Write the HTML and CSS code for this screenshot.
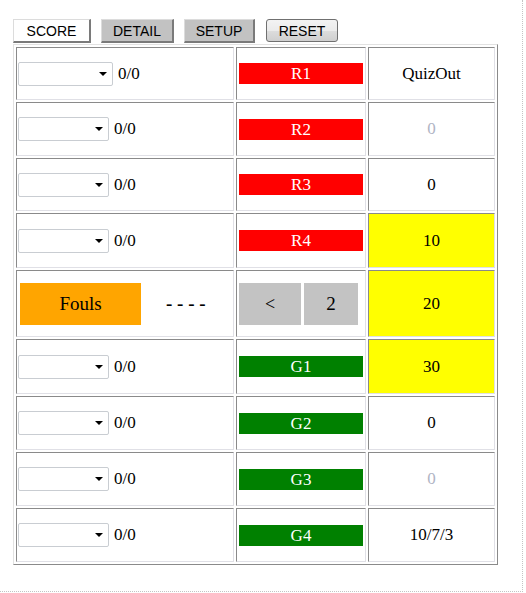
FILE: index.html
```html
<!DOCTYPE html>
<html>
<head>
<meta charset="utf-8">
<link rel="stylesheet" href="styles.css">
</head>
<body>
<div class="page">
  <div class="tabs">
    <button class="tab tab-score">SCORE</button>
    <button class="tab tab-gray tab-detail">DETAIL</button>
    <button class="tab tab-gray tab-setup">SETUP</button>
    <button class="tab-reset">RESET</button>
  </div>
  <table class="board">
    <tr class="r-a">
      <td class="c1"><span class="sel sel-wide"></span><span class="cnt cnt-wide">0/0</span></td>
      <td class="c2"><div class="bar red">R1</div></td>
      <td class="c3">QuizOut</td>
    </tr>
    <tr class="r-b">
      <td class="c1"><span class="sel"></span><span class="cnt">0/0</span></td>
      <td class="c2"><div class="bar red">R2</div></td>
      <td class="c3 dim">0</td>
    </tr>
    <tr class="r-a">
      <td class="c1"><span class="sel"></span><span class="cnt">0/0</span></td>
      <td class="c2"><div class="bar red">R3</div></td>
      <td class="c3">0</td>
    </tr>
    <tr class="r-c">
      <td class="c1"><span class="sel"></span><span class="cnt">0/0</span></td>
      <td class="c2"><div class="bar red">R4</div></td>
      <td class="c3 yellow">10</td>
    </tr>
    <tr class="r-d">
      <td class="c1">
        <div class="fouls-row">
          <div class="fouls">Fouls</div>
          <div class="dashes">- - - -</div>
        </div>
      </td>
      <td class="c2">
        <div class="nav-row">
          <div class="nav nav-prev">&lt;</div>
          <div class="nav nav-num">2</div>
        </div>
      </td>
      <td class="c3 yellow">20</td>
    </tr>
    <tr class="r-c">
      <td class="c1"><span class="sel"></span><span class="cnt">0/0</span></td>
      <td class="c2"><div class="bar green">G1</div></td>
      <td class="c3 yellow">30</td>
    </tr>
    <tr class="r-b">
      <td class="c1"><span class="sel"></span><span class="cnt">0/0</span></td>
      <td class="c2"><div class="bar green">G2</div></td>
      <td class="c3">0</td>
    </tr>
    <tr class="r-b">
      <td class="c1"><span class="sel"></span><span class="cnt">0/0</span></td>
      <td class="c2"><div class="bar green">G3</div></td>
      <td class="c3 dim">0</td>
    </tr>
    <tr class="r-b">
      <td class="c1"><span class="sel"></span><span class="cnt">0/0</span></td>
      <td class="c2"><div class="bar green">G4</div></td>
      <td class="c3">10/7/3</td>
    </tr>
  </table>
</div>
</body>
</html>
```
FILE: styles.css
```css
html, body {
  margin: 0;
  padding: 0;
  background: #ffffff;
}

.page {
  box-sizing: border-box;
  width: 523px;
  height: 592px;
  padding: 19px 0 0 13px;
  border-right: 1px dotted #c4c4c4;
  border-bottom: 1px dotted #c4c4c4;
}

.tabs {
  display: flex;
  height: 24px;
  margin-bottom: 1px;
}

.tab {
  box-sizing: border-box;
  height: 24px;
  padding: 0;
  margin: 0 10px 0 0;
  font-family: "Liberation Sans", Arial, sans-serif;
  font-size: 14px;
  color: #000;
  border-top: 1px solid #dcdcdc;
  border-left: 1px solid #dcdcdc;
  border-right: 2px solid #7a7a7a;
  border-bottom: 2px solid #7a7a7a;
  border-radius: 0;
}

.tab-score {
  width: 78px;
  background: #ffffff;
}

.tab-gray {
  background: #c2c2c2;
}

.tab-detail {
  width: 73px;
}

.tab-setup {
  width: 71px;
  margin-right: 11px;
}

.tab-reset {
  box-sizing: border-box;
  width: 72px;
  height: 23px;
  padding: 0;
  margin: 0;
  font-family: "Liberation Sans", Arial, sans-serif;
  font-size: 14px;
  color: #000;
  border: 1px solid #707070;
  border-radius: 3px;
  background: linear-gradient(#f3f3f3 0%, #ebebeb 50%, #dddddd 51%, #cfcfcf 100%);
}

.board {
  width: 485px;
  border-collapse: separate;
  border-spacing: 2px;
  border-top: 1px solid #e2e2e2;
  border-left: 1px solid #e2e2e2;
  border-right: 1px solid #8a8a8a;
  border-bottom: 1px solid #8a8a8a;
  table-layout: fixed;
  font-family: "Liberation Serif", "Times New Roman", serif;
  font-size: 17px;
  color: #000;
}

.board td {
  padding: 1px;
  border-top: 1px solid #8a8a8a;
  border-left: 1px solid #8a8a8a;
  border-right: 1px solid #e0e0e6;
  border-bottom: 1px solid #e0e0e6;
  vertical-align: middle;
}

.r-a { height: 53px; }
.r-b { height: 54px; }
.r-c { height: 55px; }
.r-d { height: 67px; }

.c1 {
  width: 214px;
  white-space: nowrap;
}

.c2 {
  width: 124px;
  padding: 1px 2px !important;
}

.c3 {
  text-align: center;
}

.sel {
  display: inline-block;
  position: relative;
  box-sizing: border-box;
  width: 91px;
  height: 24px;
  border: 1px solid #c9cdd2;
  border-radius: 2px;
  background: #fff;
  vertical-align: middle;
}

.sel-wide {
  width: 95px;
}

.sel::after {
  content: "";
  position: absolute;
  right: 5px;
  top: 9px;
  border-left: 4px solid transparent;
  border-right: 4px solid transparent;
  border-top: 4px solid #000;
}

.cnt {
  display: inline-block;
  margin-left: 5px;
  vertical-align: middle;
}

.cnt-wide {
  margin-left: 5px;
}

.bar {
  height: 21px;
  line-height: 21px;
  text-align: center;
  color: #ffffff;
}

.red { background: #ff0000; }
.green { background: #008000; }

.yellow { background: #ffff00; }

.dim { color: #b0b4c4; }

.fouls-row {
  display: flex;
  align-items: center;
}

.fouls {
  width: 121px;
  height: 42px;
  line-height: 42px;
  margin-left: 2px;
  background: #ffa500;
  text-align: center;
  font-size: 19px;
}

.dashes {
  margin-left: 25px;
  font-size: 19px;
  font-weight: bold;
  letter-spacing: 0;
}

.nav-row {
  display: flex;
  gap: 3px;
}

.nav {
  height: 42px;
  line-height: 42px;
  background: #c3c3c3;
  text-align: center;
  font-size: 19px;
}

.nav-prev {
  width: 62px;
  font-size: 18px;
}

.nav-num {
  width: 54px;
}
```
